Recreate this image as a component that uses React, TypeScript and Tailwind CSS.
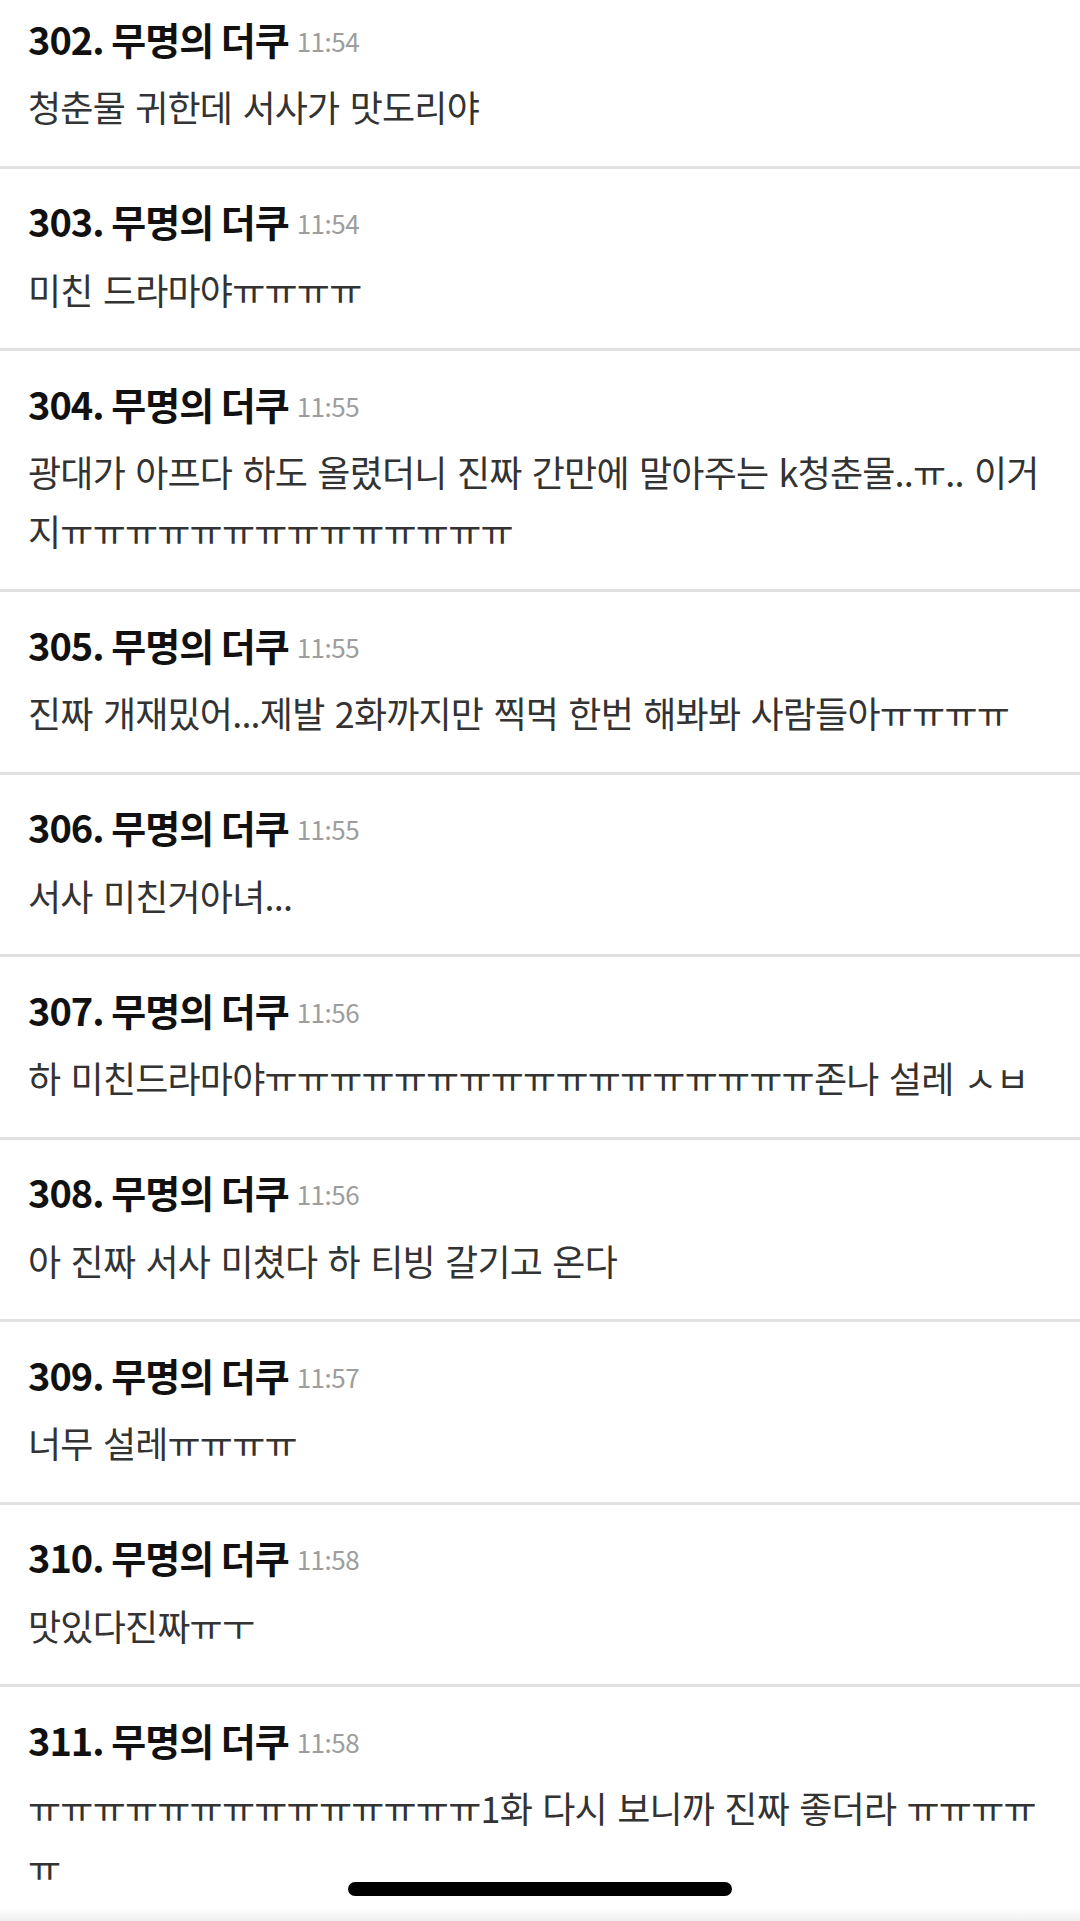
import React from 'react'

type Post = {
  no: number
  time: string
  body: string
}

const posts: Post[] = [
  { no: 302, time: '11:54', body: '청춘물 귀한데 서사가 맛도리야' },
  { no: 303, time: '11:54', body: '미친 드라마야ㅠㅠㅠㅠ' },
  { no: 304, time: '11:55', body: '광대가 아프다 하도 올렸더니 진짜 간만에 말아주는 k청춘물..ㅠ.. 이거지ㅠㅠㅠㅠㅠㅠㅠㅠㅠㅠㅠㅠㅠㅠ' },
  { no: 305, time: '11:55', body: '진짜 개재밌어...제발 2화까지만 찍먹 한번 해봐봐 사람들아ㅠㅠㅠㅠ' },
  { no: 306, time: '11:55', body: '서사 미친거아녀...' },
  { no: 307, time: '11:56', body: '하 미친드라마야ㅠㅠㅠㅠㅠㅠㅠㅠㅠㅠㅠㅠㅠㅠㅠㅠㅠ존나 설레 ㅅㅂ' },
  { no: 308, time: '11:56', body: '아 진짜 서사 미쳤다 하 티빙 갈기고 온다' },
  { no: 309, time: '11:57', body: '너무 설레ㅠㅠㅠㅠ' },
  { no: 310, time: '11:58', body: '맛있다진짜ㅠㅜ' },
  { no: 311, time: '11:58', body: 'ㅠㅠㅠㅠㅠㅠㅠㅠㅠㅠㅠㅠㅠㅠ1화 다시 보니까 진짜 좋더라 ㅠㅠㅠㅠㅠ' },
]

const font = { fontFamily: '"Noto Sans CJK KR", "Noto Sans", sans-serif' }

function PostItem({ post }: { post: Post }) {
  return (
    <div className="px-[28px] pt-[27px] pb-[30px] border-b-[3px] border-[#e1e1e1]">
      <div className="h-[50px] flex items-center whitespace-nowrap">
        <span className="text-[38px] font-bold text-[#111111] tracking-[-1px]">
          {post.no}. 무명의 더쿠
        </span>
        <span className="ml-[8px] text-[26px] text-[#9d9d9d] tracking-[-0.5px] pt-[4px]">{post.time}</span>
      </div>
      <p className="mt-[14px] text-[36px] leading-[58.5px] text-[#333333] tracking-[-0.8px] [word-spacing:3px]">
        {post.body}
      </p>
    </div>
  )
}

export default function App() {
  return (
    <div className="relative w-[1080px] h-[1921px] overflow-hidden bg-white" style={font}>
      <div className="-mt-[14px]">
        {posts.map((post) => (
          <PostItem key={post.no} post={post} />
        ))}
      </div>
      <div className="absolute left-0 right-0 bottom-0 h-[12px] bg-gradient-to-b from-white to-[#efefef]"></div>
      <div className="absolute left-[348px] top-[1882px] w-[384px] h-[14px] rounded-full bg-black"></div>
    </div>
  )
}
